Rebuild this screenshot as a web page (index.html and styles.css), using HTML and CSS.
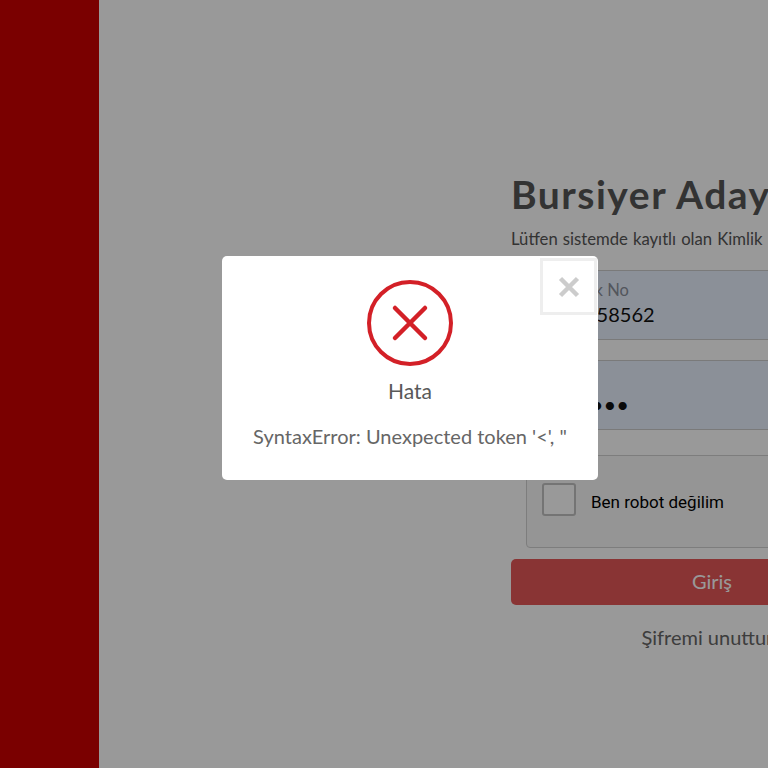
FILE: index.html
```html
<!DOCTYPE html>
<html lang="tr">
<head>
<meta charset="utf-8">
<title>Bursiyer Adayı Girişi</title>
<link rel="stylesheet" href="styles.css">
</head>
<body>
<div class="page">
  <aside class="sidebar"></aside>
  <main class="main">
    <form class="form">
      <h1 class="title">Bursiyer Adayı Girişi</h1>
      <p class="lead">Lütfen sistemde kayıtlı olan Kimlik Numaranız ve şifreniz ile giriş yapınız.</p>
      <div class="field">
        <div class="label">T.C. Kimlik No</div>
        <div class="value">12345658562</div>
      </div>
      <div class="field field-pass">
        <div class="value dots">••••••••</div>
      </div>
      <div class="captcha">
        <span class="check"></span>
        <span class="captcha-text">Ben robot değilim</span>
      </div>
      <div class="submit">Giriş</div>
      <div class="forgot">Şifremi unuttum</div>
    </form>
  </main>
</div>
<div class="overlay">
  <div class="modal">
    <div class="close">
      <svg width="22" height="22" viewBox="0 0 22 22"><path d="M2.5 2.5 19.500 19.500M19.500 2.500 2.500 19.500" class="close-x"/></svg>
    </div>
    <svg class="err-icon" width="86" height="86" viewBox="0 0 86 86">
      <circle cx="43" cy="43" r="41" class="err-ring"/>
      <path d="M28 28 58 58M58 28 28 58" class="err-x"/>
    </svg>
    <div class="modal-title">Hata</div>
    <div class="modal-text">SyntaxError: Unexpected token '&lt;', "</div>
  </div>
</div>
</body>
</html>
```

FILE: styles.css
```css
html, body {
  margin: 0;
  padding: 0;
  height: 100%;
  overflow: hidden;
  background: #fff;
}

.page {
  display: flex;
  width: 768px;
  height: 768px;
  overflow: hidden;
  font-family: "Lato", "Open Sans", sans-serif;
}

.sidebar {
  flex: 0 0 99px;
  background: #cc0000;
}

.main {
  flex: 1 0 0;
  min-width: 0;
  padding: 174px 0 0 412px;
}

.form {
  width: 402px;
}

.title {
  margin: 0;
  font-size: 39px;
  line-height: 40px;
  font-weight: 700;
  letter-spacing: 1.500px;
  color: #555;
  white-space: nowrap;
}

.lead {
  margin: 16px 0 21px;
  font-size: 16.700px;
  line-height: 19px;
  word-spacing: 0.800px;
  color: #555;
  white-space: nowrap;
}

.field {
  box-sizing: border-box;
  height: 70px;
  padding: 9px 16px 0;
  background: #e8f0fe;
  border-top: 1px solid #ccc;
  border-bottom: 1px solid #ccc;
}

.field-pass {
  margin-top: 20px;
  padding-top: 31px;
}

.label {
  font-size: 16.500px;
  line-height: 20px;
  color: #8a8f9a;
}

.value {
  margin-top: 1px;
  font-size: 20px;
  line-height: 26px;
  color: #111;
}

.dots {
  margin-top: 0;
  font-size: 22px;
  line-height: 26px;
}

.captcha {
  box-sizing: border-box;
  display: flex;
  align-items: center;
  gap: 15px;
  height: 93px;
  margin: 25px 0 11px 15px;
  padding: 0 0 0 15px;
  border: 1px solid #d0d0d0;
  border-radius: 4px;
  background: #f9f9f9;
}

.check {
  box-sizing: border-box;
  width: 34px;
  height: 33px;
  margin-bottom: 5px;
  border: 2px solid #c1c1c1;
  border-radius: 3px;
  background: #fff;
}

.captcha-text {
  margin-top: 1px;
  font-family: "Roboto", sans-serif;
  font-size: 17px;
  color: #000;
}

.submit {
  height: 46px;
  border-radius: 5px;
  background: #e45858;
  color: #fff;
  font-size: 20px;
  line-height: 44px;
  text-align: center;
}

.forgot {
  margin-top: 19px;
  font-size: 20px;
  line-height: 26px;
  color: #666;
  text-align: center;
  white-space: nowrap;
}

.overlay {
  position: fixed;
  inset: 0;
  background: rgba(0, 0, 0, 0.4);
}

.modal {
  position: absolute;
  left: 222px;
  top: 256px;
  box-sizing: border-box;
  width: 376px;
  height: 224px;
  padding-top: 24px;
  display: flex;
  flex-direction: column;
  align-items: center;
  border-radius: 5px;
  background: #fff;
  font-family: "Lato", "Open Sans", sans-serif;
}

.close {
  position: absolute;
  top: 2px;
  right: 1px;
  box-sizing: border-box;
  width: 57px;
  height: 57px;
  display: flex;
  align-items: center;
  justify-content: center;
  border: 3px solid #eeeeee;
}

.close-x {
  fill: none;
  stroke: #cccccc;
  stroke-width: 4.500;
}

.err-ring {
  fill: none;
  stroke: #d32027;
  stroke-width: 4;
}

.err-x {
  fill: none;
  stroke: #d32027;
  stroke-width: 4.500;
  stroke-linecap: round;
}

.modal-title {
  margin-top: 12px;
  font-size: 21px;
  line-height: 26px;
  color: #595959;
}

.modal-text {
  margin-top: 19px;
  font-size: 20px;
  line-height: 26px;
  color: #666;
  white-space: nowrap;
}
```
